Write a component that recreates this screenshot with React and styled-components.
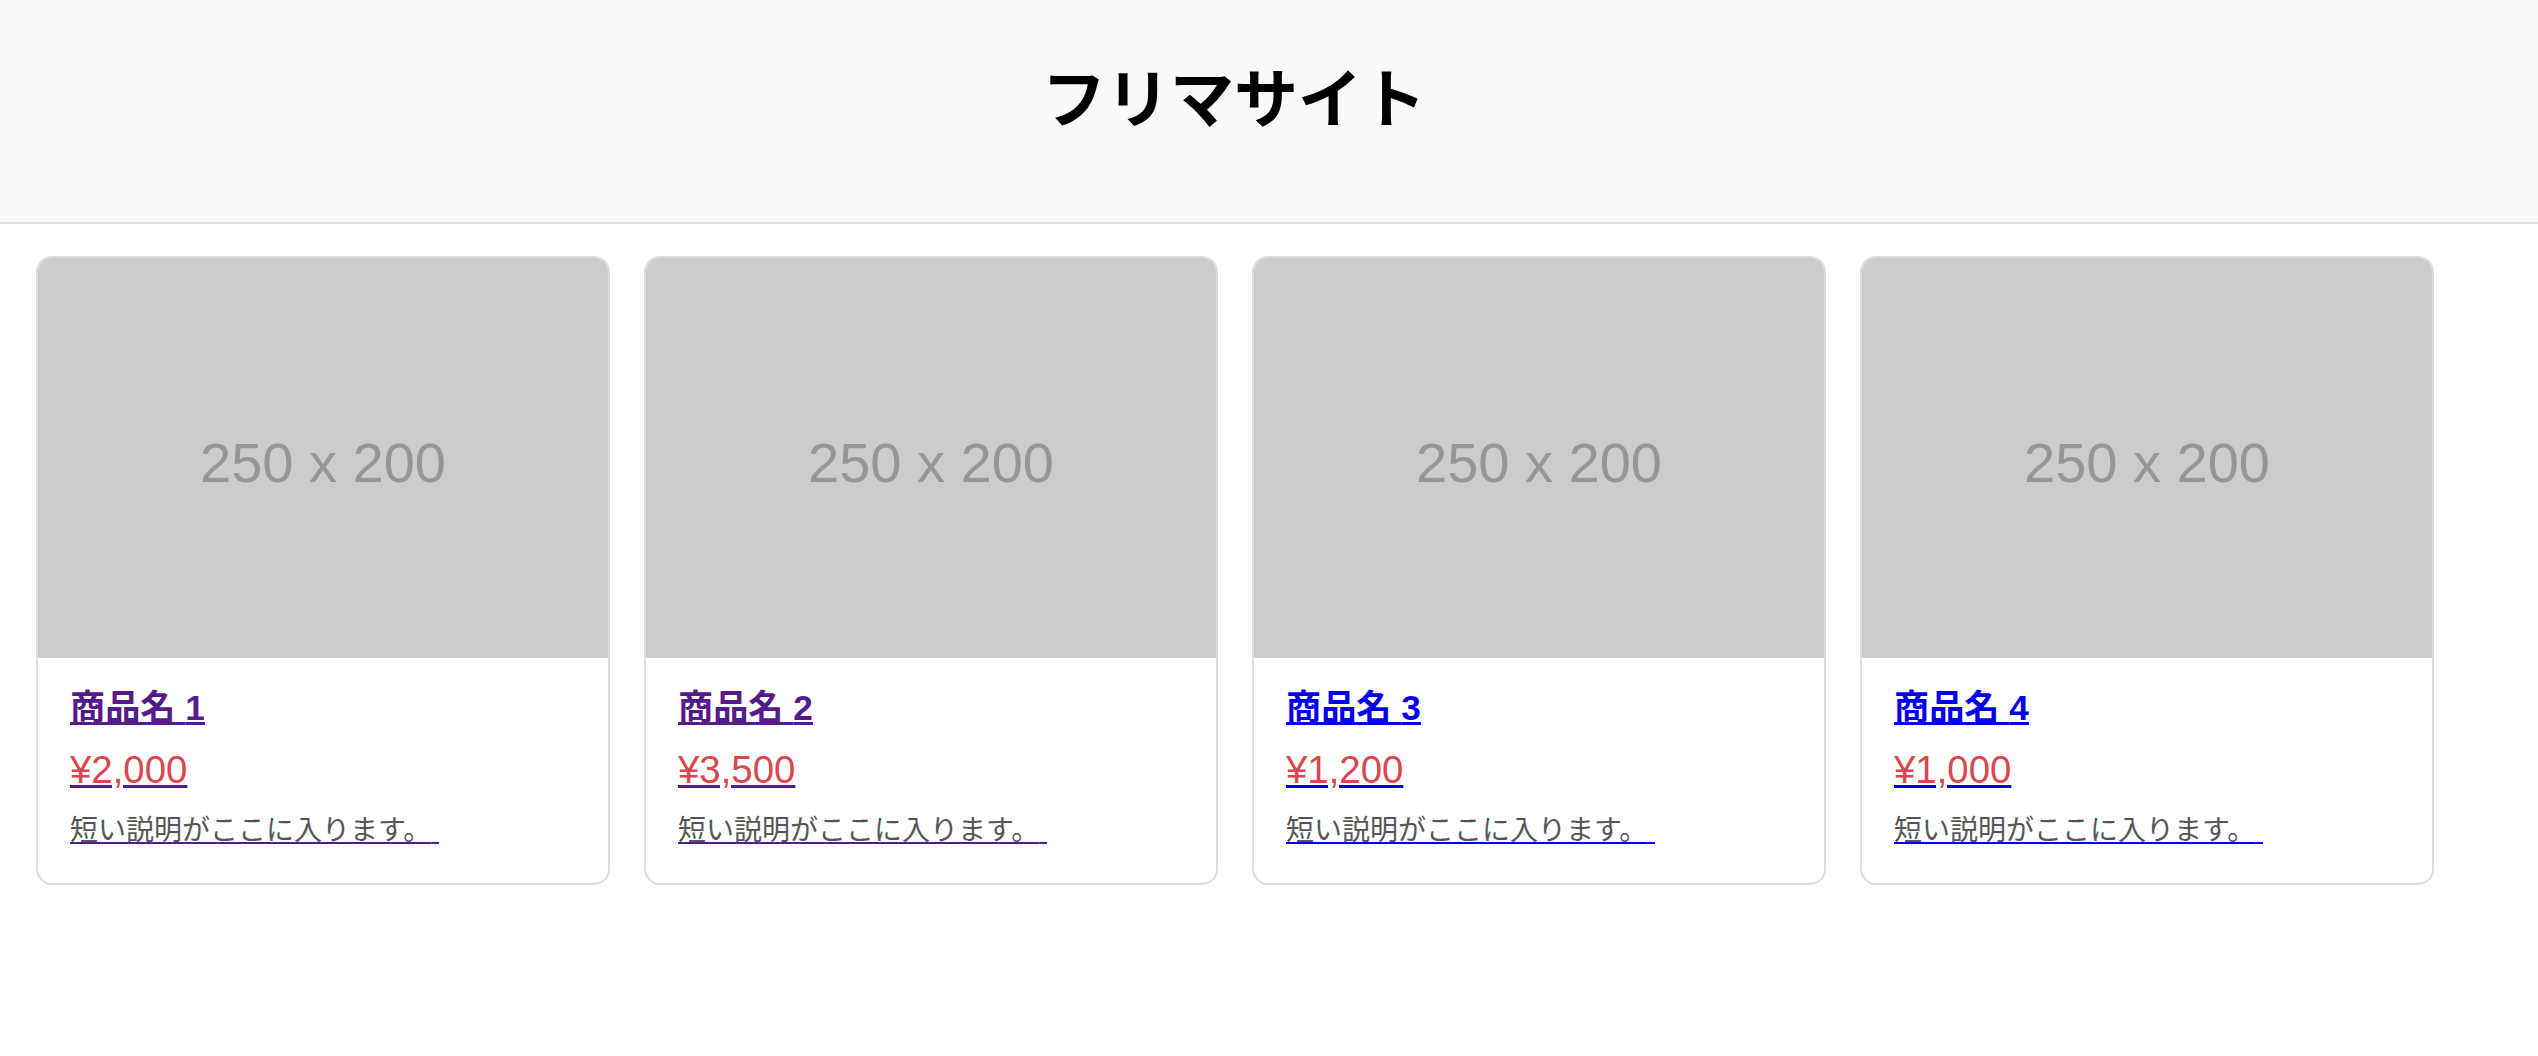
import React from 'react';
import styled, { createGlobalStyle } from 'styled-components';

const GlobalStyle = createGlobalStyle`
    html, body {
        margin: 0;
        padding: 0;
        background: #fff;
    }

    body {
        font-family: "Liberation Sans", "Noto Sans CJK JP", sans-serif;
        color: #000;
    }
`;

const Header = styled.header`
    box-sizing: border-box;
    height: 224px;
    padding: 0 70px 0 0;
    background: #f8f9fa;
    border-bottom: 2px solid #dedfe0;
    display: flex;
    align-items: center;
    justify-content: center;

    h1 {
        margin: 0 0 34px;
        font-size: 64px;
        line-height: 1.2;
        font-weight: 700;
        font-family: "Noto Sans CJK JP", sans-serif;
    }
`;

const Grid = styled.main`
    display: flex;
    gap: 34px;
    padding: 32px 36px;
`;

const Card = styled.a`
    box-sizing: border-box;
    width: 574px;
    flex: none;
    display: flex;
    flex-direction: column;
    border: 2px solid #dcdcdc;
    border-radius: 16px;
    overflow: hidden;
    background: #fff;
    color: ${(p) => (p.visited ? '#551a8b' : '#0000ee')};
    text-decoration: underline;
`;

const Placeholder = styled.div`
    box-sizing: border-box;
    height: 400px;
    padding-top: 171px;
    background: #cccccc;
    text-align: center;
    font-size: 56px;
    line-height: 1.2;
    color: #969696;
`;

// inline-block stops the link underline from reaching the placeholder label
const PlaceholderLabel = styled.span`
    display: inline-block;
`;

const Body = styled.div`
    padding: 29px 32px 35px;
    display: flex;
    flex-direction: column;
`;

const Title = styled.span`
    font-size: 35.2px;
    line-height: 1.2;
    font-weight: 700;
`;

const Price = styled.span`
    margin-top: 18px;
    font-size: 38.4px;
    line-height: 1.2;
    color: #d9464b;
`;

const Description = styled.span`
    margin-top: 21px;
    font-size: 28px;
    line-height: 1.2;
    color: #555;
`;

const items = [
    { id: 1, price: '¥2,000', visited: true },
    { id: 2, price: '¥3,500', visited: true },
    { id: 3, price: '¥1,200', visited: false },
    { id: 4, price: '¥1,000', visited: false },
];

const App = () => {
    return (
        <>
            <GlobalStyle />
            <Header>
                <h1>フリマサイト</h1>
            </Header>
            <Grid>
                {items.map((item) => (
                    <Card key={item.id} href='#' visited={item.visited ? 1 : 0}>
                        <Placeholder>
                            <PlaceholderLabel>250 x 200</PlaceholderLabel>
                        </Placeholder>
                        <Body>
                            <Title>商品名 {item.id}</Title>
                            <Price>{item.price}</Price>
                            <Description>短い説明がここに入ります。{'\u00a0'}</Description>
                        </Body>
                    </Card>
                ))}
            </Grid>
        </>
    );
};

export default App;
